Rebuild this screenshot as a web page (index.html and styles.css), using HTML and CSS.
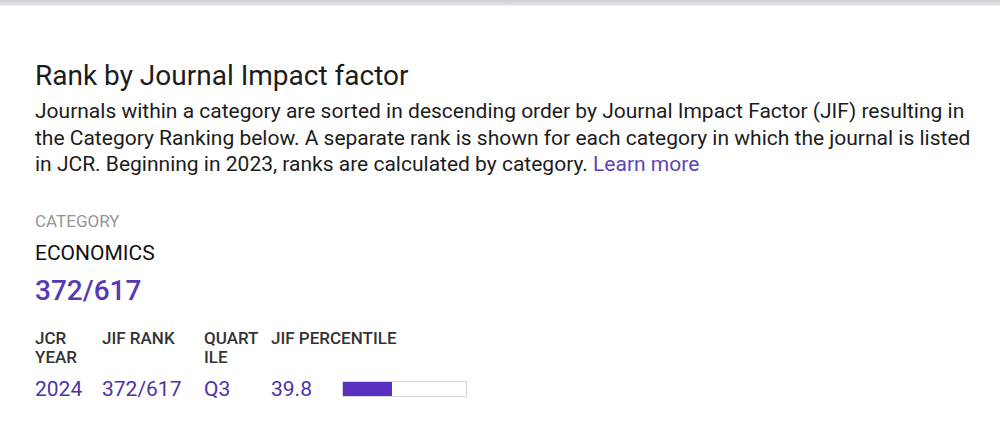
FILE: index.html
```html
<!DOCTYPE html>
<html>
<head>
<meta charset="utf-8">
<link rel="stylesheet" href="styles.css">
</head>
<body>
<div class="topbar"></div>
<main class="panel">
  <h2 class="title">Rank by Journal Impact factor</h2>
  <p class="desc">Journals within a category are sorted in descending order by Journal Impact Factor (JIF) resulting in the Category Ranking below. A separate rank is shown for each category in which the journal is listed in JCR. Beginning in 2023, ranks are calculated by category. <a class="link" href="#">Learn more</a></p>
  <div class="cat-label">CATEGORY</div>
  <div class="cat-name">ECONOMICS</div>
  <div class="cat-rank">372/617</div>
  <div class="table">
    <div class="th c1">JCR YEAR</div>
    <div class="th c2">JIF RANK</div>
    <div class="th c3">QUARTILE</div>
    <div class="th c4">JIF PERCENTILE</div>
    <div class="td">2024</div>
    <div class="td">372/617</div>
    <div class="td">Q3</div>
    <div class="td pct">
      <span class="pct-val">39.8</span>
      <span class="bar"><span class="fill" style="width:39.8%"></span></span>
    </div>
  </div>
</main>
</body>
</html>
```
FILE: styles.css
```css
html, body {
  margin: 0;
  padding: 0;
  background: #fff;
}
body {
  font-family: Roboto, "Liberation Sans", Arial, sans-serif;
  color: #1a1a1a;
}
.topbar {
  height: 6px;
  background: linear-gradient(#cfcfd4, #dcdce0 60%, #f1f1f5);
}
.panel {
  padding: 0 15px 0 35px;
}
.title {
  margin: 54px 0 0;
  font-size: 28px;
  line-height: 32px;
  font-weight: 400;
  color: #1c1c1c;
}
.desc {
  margin: 6px 0 0;
  font-size: 21px;
  line-height: 26.5px;
  color: #1c1c1c;
}
.link {
  color: #5c45b5;
  text-decoration: none;
}
.cat-label {
  margin-top: 33px;
  font-size: 17px;
  line-height: 20px;
  color: #959595;
}
.cat-name {
  margin-top: 10px;
  font-size: 21px;
  line-height: 24px;
  color: #111;
}
.cat-rank {
  margin-top: 10px;
  font-size: 28px;
  line-height: 32px;
  font-weight: 500;
  color: #5a37b5;
}
.table {
  margin-top: 22px;
  display: grid;
  grid-template-columns: 67px 102px 67px auto;
  align-items: start;
}
.th {
  font-size: 17px;
  line-height: 19px;
  font-weight: 500;
  color: #333;
}
.c1 {
  padding-right: 4px;
}
.c3 {
  word-break: break-all;
  width: 58px;
}
.td {
  margin-top: 10px;
  font-size: 21px;
  line-height: 24px;
  color: #4d33a6;
}
.pct {
  display: flex;
  align-items: center;
  gap: 30px;
}
.bar {
  display: block;
  width: 123px;
  height: 14px;
  border: 1px solid #d6d6d6;
  background: #fff;
}
.fill {
  display: block;
  height: 100%;
  background: #5b2fc2;
}
```
